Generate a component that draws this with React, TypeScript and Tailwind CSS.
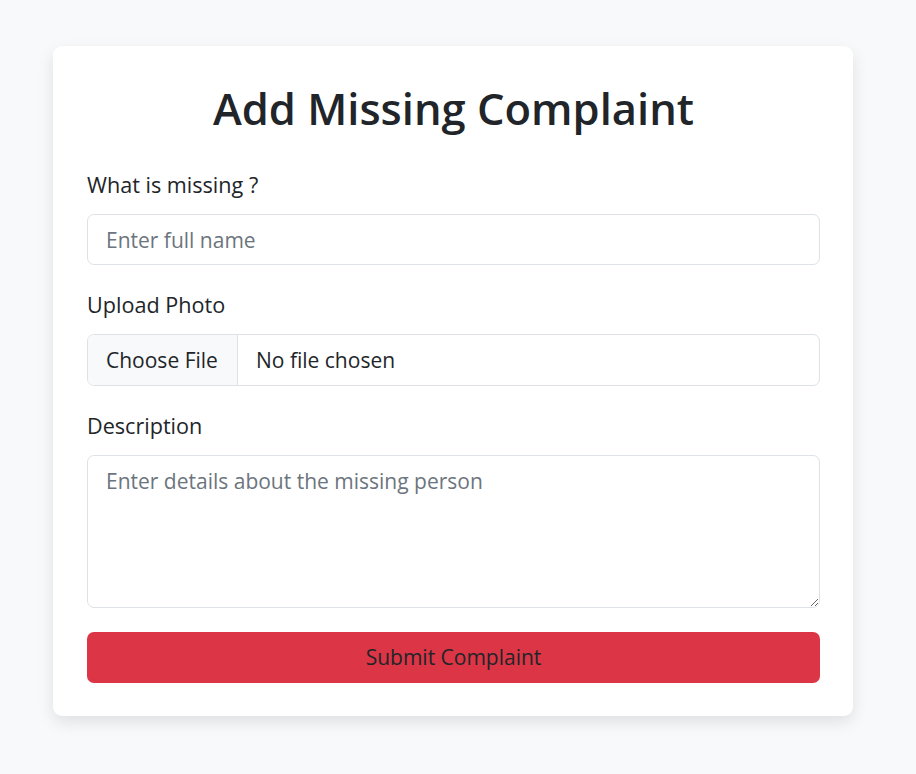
export default function App() {
  return (
    <div className="min-h-screen bg-[#f8f9fa] pt-[46px] font-['Open_Sans',sans-serif] text-[#212529]">
      <div className="ml-[53px] w-[800px] rounded-[9px] bg-white pl-[34px] pr-[33px] pt-[35px] pb-[33px] shadow-[0_6px_16px_rgba(0,0,0,0.1)]">
        <h1 className="text-center text-[43.5px] leading-[56px] font-semibold">Add Missing Complaint</h1>

        <form className="mt-[33px]" onSubmit={(e) => e.preventDefault()}>
          {/* Name */}
          <div className="mb-[25px]">
            <label className="mb-[14px] block text-[21.6px] leading-[30px]">What is missing ?</label>
            <input
              type="text"
              placeholder="Enter full name"
              className="block h-[51px] w-full rounded-[7px] border border-[#dee2e6] px-[18px] text-[21px] placeholder:text-[#6c757d] focus:outline-none"
            />
          </div>

          {/* Photo */}
          <div className="mb-[25px]">
            <label className="mb-[14px] block text-[21.6px] leading-[30px]">Upload Photo</label>
            <div className="flex h-[52px] w-full items-stretch overflow-hidden rounded-[7px] border border-[#dee2e6] pt-[2px] text-[21px]">
              <span className="-mt-[2px] flex w-[150px] items-center border-r border-[#dee2e6] bg-[#f8f9fa] px-[18px] pt-[2px] whitespace-nowrap">Choose File</span>
              <span className="flex items-center px-[18px]">No file chosen</span>
            </div>
          </div>

          {/* Description */}
          <div className="mb-[24px]">
            <label className="mb-[14px] block text-[21.6px] leading-[30px]">Description</label>
            <textarea
              placeholder="Enter details about the missing person"
              className="block h-[153px] w-full resize-y rounded-[7px] border border-[#dee2e6] px-[18px] py-[10px] text-[21px] leading-[30px] placeholder:text-[#6c757d] focus:outline-none"
            />
          </div>

          <button
            type="submit"
            className="block h-[51px] w-full rounded-[7px] bg-[#dc3545] text-[21px] text-[#212529]"
          >
            Submit Complaint
          </button>
        </form>
      </div>
    </div>
  );
}
